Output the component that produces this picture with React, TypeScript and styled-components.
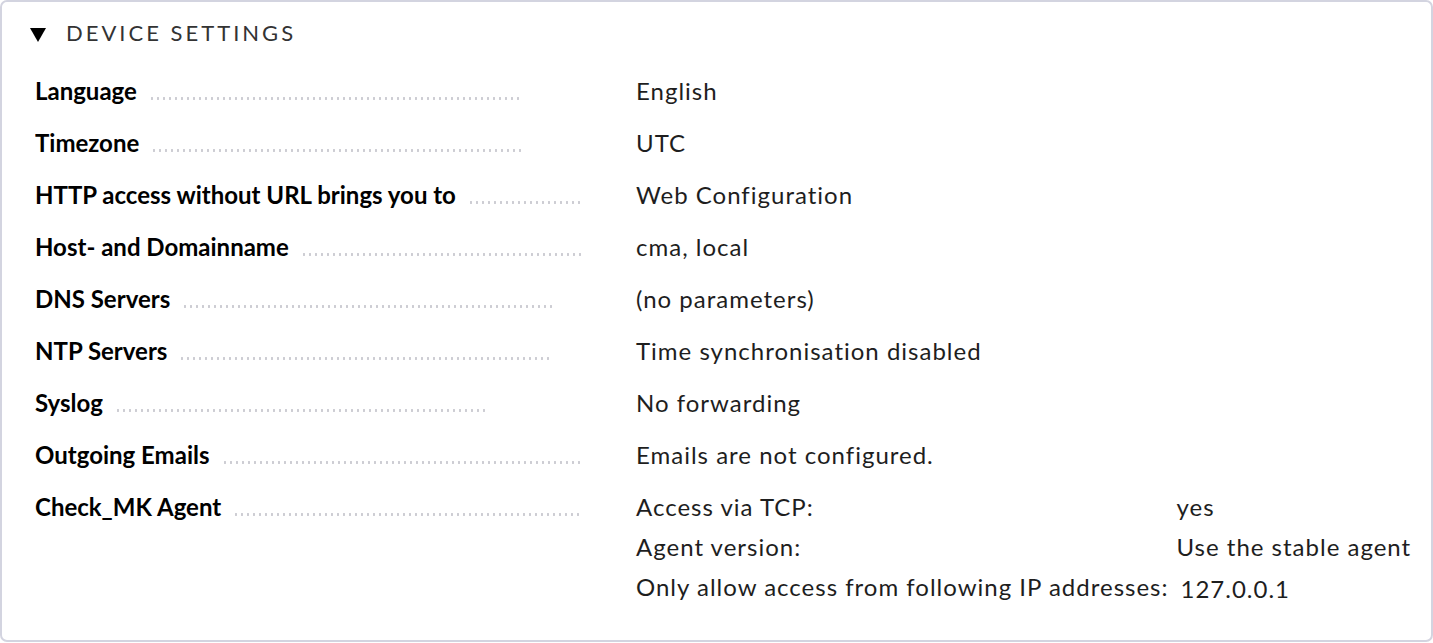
import React from 'react';
import styled, { createGlobalStyle } from 'styled-components';

const GlobalStyle = createGlobalStyle`
  html, body {
    margin: 0;
    padding: 0;
    background: #ffffff;
  }
  body {
    font-family: Lato, 'Open Sans', sans-serif;
    color: #1e1e1e;
  }
`;

const Box = styled.section`
  box-sizing: border-box;
  width: 1433px;
  height: 642px;
  border: 2px solid #d3d4e0;
  border-radius: 7px;
  padding: 12px 0 0 33px;
`;

const Header = styled.div`
  display: flex;
  align-items: center;
  gap: 20px;
  height: 36px;
  margin-left: -5px;
  margin-bottom: 15px;
`;

const Triangle = styled.span`
  width: 0;
  height: 0;
  border-left: 8px solid transparent;
  border-right: 8px solid transparent;
  border-top: 14px solid #000;
  margin-top: 5px;
`;

const Title = styled.h2`
  margin: 0;
  font-size: 22px;
  font-weight: 400;
  letter-spacing: 3px;
  color: #333;
`;

const Grid = styled.div`
  display: grid;
  grid-template-columns: 548px 1fr;
  column-gap: 53px;
`;

const Label = styled.div`
  display: flex;
  align-items: baseline;
  overflow: hidden;
  white-space: nowrap;
  height: 52px;
  font-size: 24px;
  font-weight: 700;
  color: #000;
  line-height: 52px;
`;

const Dots = styled.span`
  flex: none;
  width: 371px;
  height: 3px;
  margin-left: 12px;
  background-image: radial-gradient(circle, #cdcdd3 1.1px, transparent 1.4px);
  background-size: 6px 3px;
  background-repeat: repeat-x;
`;

const Value = styled.div`
  font-size: 24px;
  letter-spacing: 1px;
  line-height: 52px;
  height: 52px;
  white-space: nowrap;
`;

const SubGrid = styled.div`
  display: grid;
  grid-template-columns: max-content 1fr;
  column-gap: 8px;
  font-size: 24px;
  letter-spacing: 1px;
  line-height: 40px;
  padding-top: 6px;
`;

const SubValue = styled.div<{ $shifted?: boolean }>`
  padding-left: ${(p) => (p.$shifted ? '4px' : '0')};
  padding-top: ${(p) => (p.$shifted ? '2px' : '0')};
  white-space: nowrap;
`;

const rows: [string, string][] = [
  ['Language', 'English'],
  ['Timezone', 'UTC'],
  ['HTTP access without URL brings you to', 'Web Configuration'],
  ['Host- and Domainname', 'cma, local'],
  ['DNS Servers', '(no parameters)'],
  ['NTP Servers', 'Time synchronisation disabled'],
  ['Syslog', 'No forwarding'],
  ['Outgoing Emails', 'Emails are not configured.'],
];

const App = () => {
  return (
    <>
      <GlobalStyle />
      <Box>
        <Header>
          <Triangle />
          <Title>DEVICE SETTINGS</Title>
        </Header>
        <Grid>
          {rows.map(([label, value]) => (
            <React.Fragment key={label}>
              <Label>
                {label}
                <Dots />
              </Label>
              <Value>{value}</Value>
            </React.Fragment>
          ))}
          <Label>
            Check_MK Agent
            <Dots />
          </Label>
          <SubGrid>
            <div>Access via TCP:</div>
            <SubValue>yes</SubValue>
            <div>Agent version:</div>
            <SubValue>Use the stable agent</SubValue>
            <div>Only allow access from following IP addresses:</div>
            <SubValue $shifted>127.0.0.1</SubValue>
          </SubGrid>
        </Grid>
      </Box>
    </>
  );
};

export default App;
